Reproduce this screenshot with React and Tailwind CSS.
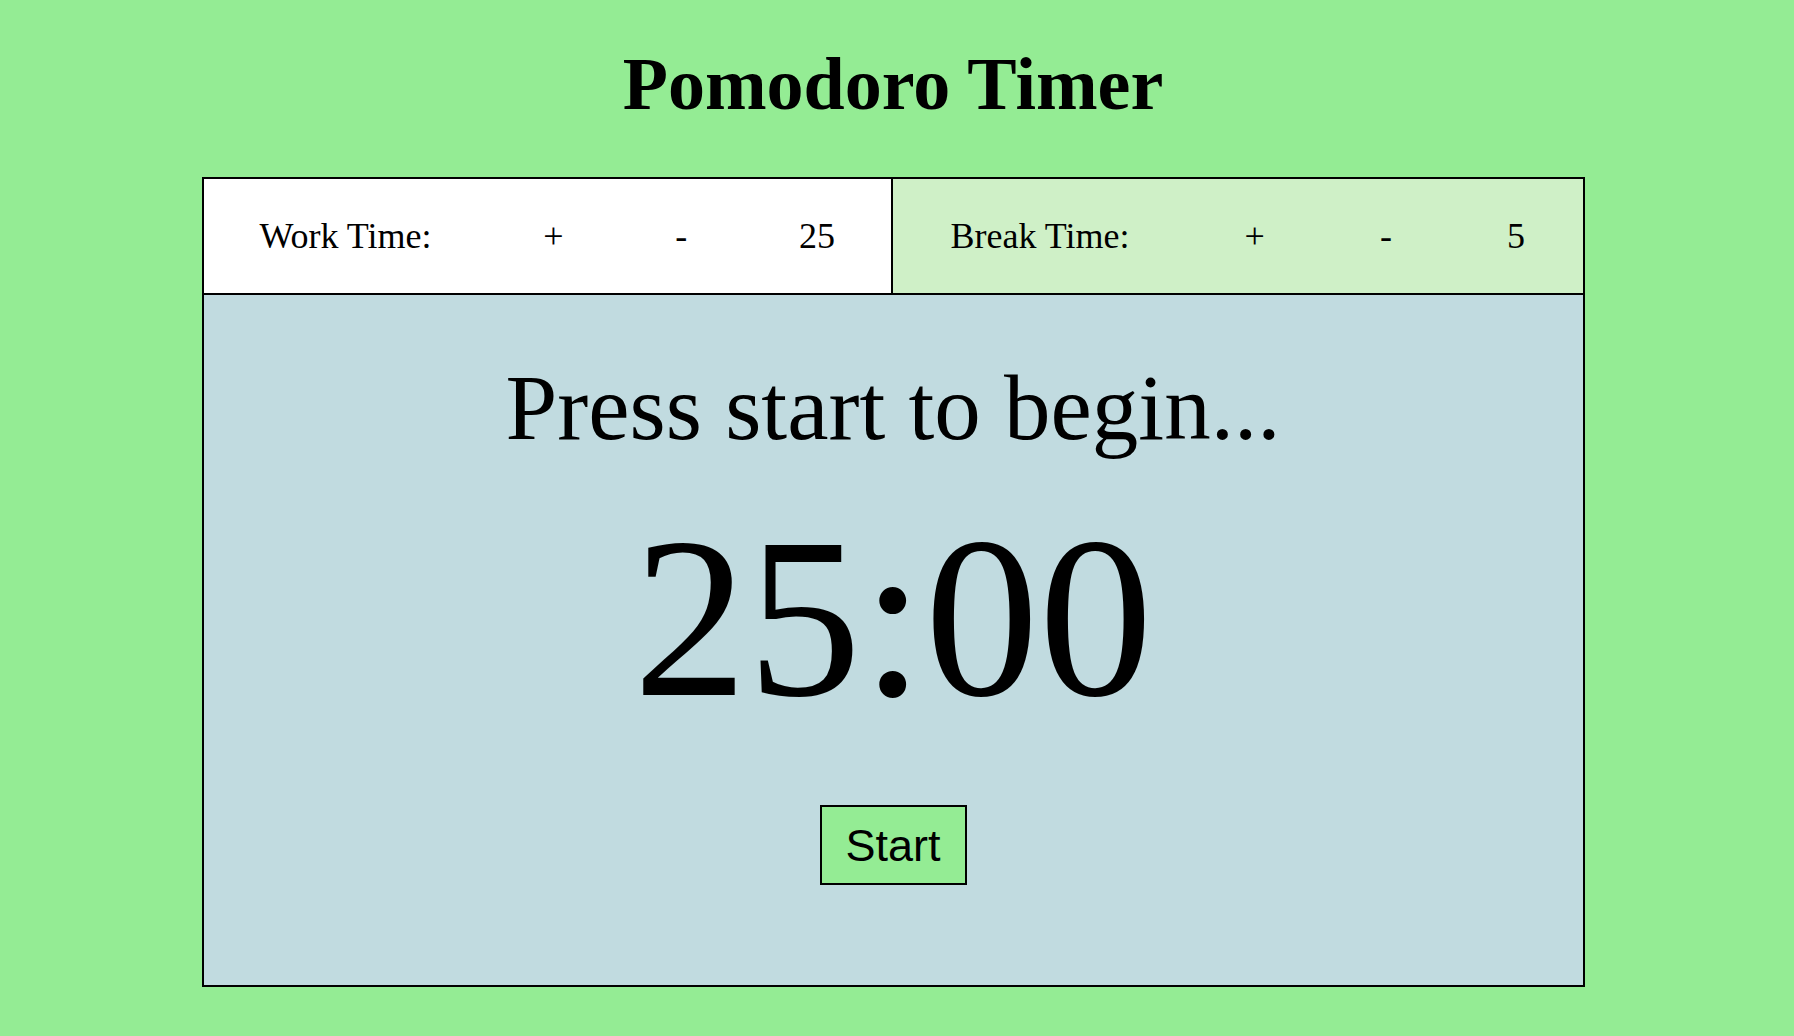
import { useState } from "react";

const serif = "font-['Liberation_Serif','Times_New_Roman',serif]";

const Setting = ({ label, value, onUp, onDown, tone }) => (
  <div className={`h-[114px] flex items-center justify-around text-[36px] leading-none text-black ${tone}`}>
    <span>{label}</span>
    <button type="button" onClick={onUp} className="cursor-pointer">+</button>
    <button type="button" onClick={onDown} className="cursor-pointer">-</button>
    <span>{value}</span>
  </div>
);

export default function App() {
  const [work, setWork] = useState(25);
  const [rest, setRest] = useState(5);

  const pad = (n) => String(n).padStart(2, "0");

  return (
    <div className={`min-h-screen bg-[#94ec94] flex flex-col items-center pr-[8px] ${serif}`}>
      <h1 className="mt-[47px] text-[74px] leading-none font-bold text-black">Pomodoro Timer</h1>

      <div className="mt-[56px] w-[1383px] border-2 border-black">
        {/* settings row */}
        <div className="grid grid-cols-2 border-b-2 border-black">
          <Setting
            label="Work Time:"
            value={work}
            tone="bg-white border-r-2 border-black"
            onUp={() => setWork((w) => Math.min(60, w + 1))}
            onDown={() => setWork((w) => Math.max(1, w - 1))}
          />
          <Setting
            label="Break Time:"
            value={rest}
            tone="bg-[#cff0c7]"
            onUp={() => setRest((r) => Math.min(30, r + 1))}
            onDown={() => setRest((r) => Math.max(1, r - 1))}
          />
        </div>

        {/* timer */}
        <div className="bg-[#c1dbe0] flex flex-col items-center pt-[66px] pb-[100px] text-black">
          <p className="text-[93px] leading-none">Press start to begin...</p>
          <p className="mt-[50px] text-[228px] leading-none">{pad(work)}:00</p>
          <button
            type="button"
            className="mt-[73px] w-[147px] h-[80px] flex items-center justify-center bg-[#94ec94] border-2 border-black text-[45px] leading-none font-['Liberation_Sans',Arial,sans-serif] cursor-pointer"
          >
            Start
          </button>
        </div>
      </div>
    </div>
  );
}
